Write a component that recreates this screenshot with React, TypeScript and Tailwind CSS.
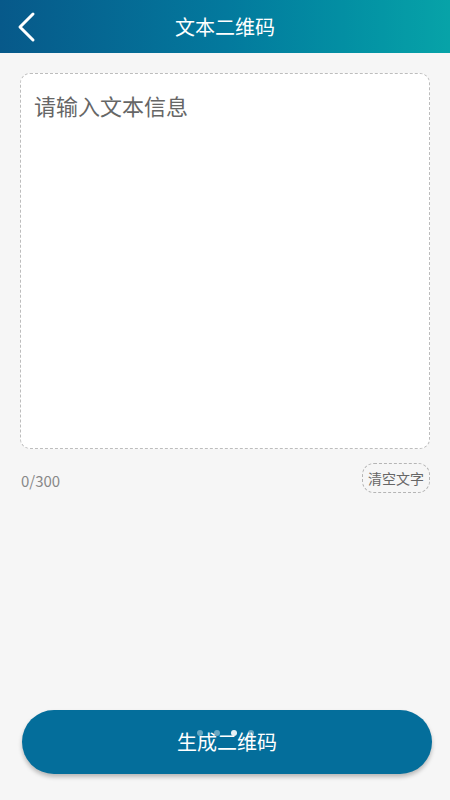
import { useState } from "react";

export default function App() {
  const [text, setText] = useState("");

  return (
    <div
      className="w-[450px] h-[800px] bg-[#f6f6f6] flex flex-col"
      style={{ fontFamily: '"Noto Sans CJK SC", "Noto Sans", sans-serif' }}
    >
      {/* Header */}
      <div className="h-[53px] shrink-0 bg-gradient-to-r from-[#07598a] via-[#03799d] to-[#07a3a8] flex items-center relative">
        <button className="w-[54px] h-full flex items-center justify-center">
          <svg width="20" height="32" viewBox="0 0 20 32" fill="none" stroke="white" strokeWidth="3" strokeLinecap="round" strokeLinejoin="round">
            <polyline points="16 3 3 16 16 29" />
          </svg>
        </button>
        <h1 className="absolute left-1/2 -translate-x-1/2 text-white text-[20px] leading-none">文本二维码</h1>
      </div>

      {/* Content */}
      <div className="flex-1 flex flex-col px-5 pt-5">
        <div className="h-[376px] bg-white border border-dashed border-[#bdbdbd] rounded-[10px] px-[13px] pt-[16px]">
          <textarea
            value={text}
            onChange={(e) => setText(e.target.value.slice(0, 300))}
            placeholder="请输入文本信息"
            className="w-full h-full resize-none outline-none bg-transparent text-[22px] text-[#555] placeholder:text-[#666] leading-[30px]"
          />
        </div>

        <div className="flex items-center justify-between mt-[14px]">
          <span className="text-[15px] text-[#888] pl-px mt-[6px]">{text.length}/300</span>
          <button
            onClick={() => setText("")}
            className="h-[30px] px-[5px] border border-dashed border-[#b5b5b5] rounded-[12px] text-[14px] text-[#666]"
          >
            清空文字
          </button>
        </div>
      </div>

      {/* Generate button */}
      <div className="pb-[26px] pl-[22px] pr-[18px]">
        <button className="relative w-full h-[64px] rounded-[32px] bg-[#046e9b] shadow-[0_3px_4px_rgba(0,0,0,0.25)] text-white text-[20px] flex items-center justify-center">
          生成二维码
          <span className="absolute left-1/2 top-[20px] -translate-x-[30px] flex gap-[11px]">
            <span className="w-[6px] h-[6px] rounded-full bg-white/40" />
            <span className="w-[6px] h-[6px] rounded-full bg-white/40" />
            <span className="w-[6px] h-[6px] rounded-full bg-white/90" />
            <span className="w-[6px] h-[6px] rounded-full bg-white/40" />
          </span>
        </button>
      </div>
    </div>
  );
}
